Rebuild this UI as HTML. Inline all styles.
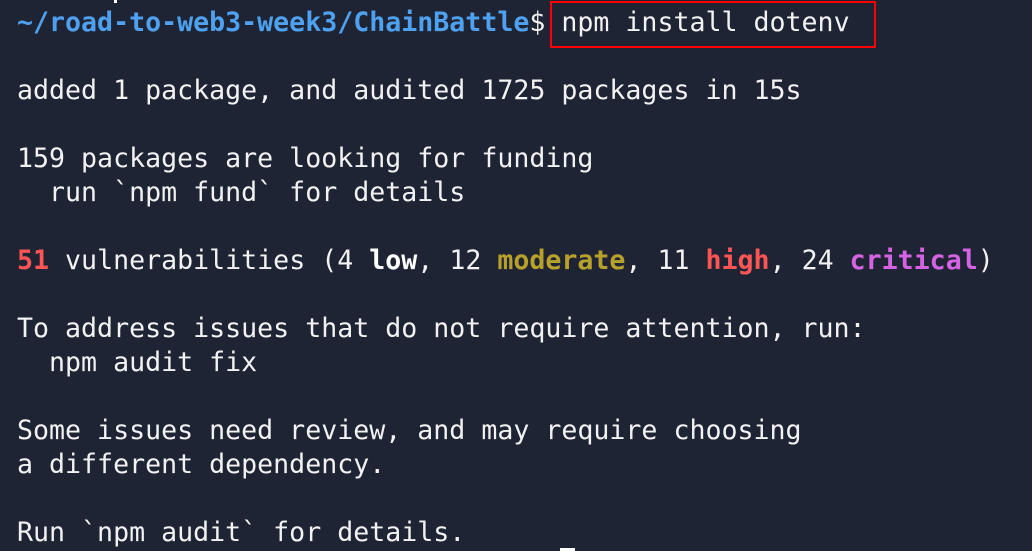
<!DOCTYPE html>
<html><head><meta charset="utf-8"><style>
html,body{margin:0;padding:0;background:#1e2433;width:1032px;height:551px;overflow:hidden}
pre{margin:0;position:absolute;left:17px;top:6px;font-family:"DejaVu Sans Mono","Liberation Mono",monospace;font-size:26.6px;line-height:34px;color:#f2f2f2;white-space:pre}
.b{color:#4ea1f0;font-weight:bold}
.r{color:#f55;font-weight:bold}
.y{color:#b8a12a;font-weight:bold}
.m{color:#d662e6;font-weight:bold}
.w{font-weight:bold;color:#fff}
.box{position:absolute;left:550px;top:1px;width:322px;height:43px;border:2px solid #f00}
.cur{position:absolute;left:560px;top:548px;width:15px;height:3px;background:#fff}
.top{position:absolute;left:114px;top:0;width:3px;height:3px;background:#fff}
</style></head><body>
<div class="top"></div>
<pre><span class="b">~/road-to-web3-week3/ChainBattle</span>$ npm install dotenv

added 1 package, and audited 1725 packages in 15s

159 packages are looking for funding
  run `npm fund` for details

<span class="r">51</span> vulnerabilities (4 <span class="w">low</span>, 12 <span class="y">moderate</span>, 11 <span class="r">high</span>, 24 <span class="m">critical</span>)

To address issues that do not require attention, run:
  npm audit fix

Some issues need review, and may require choosing
a different dependency.

Run `npm audit` for details.</pre>
<div class="box"></div>
<div class="cur"></div>
</body></html>
